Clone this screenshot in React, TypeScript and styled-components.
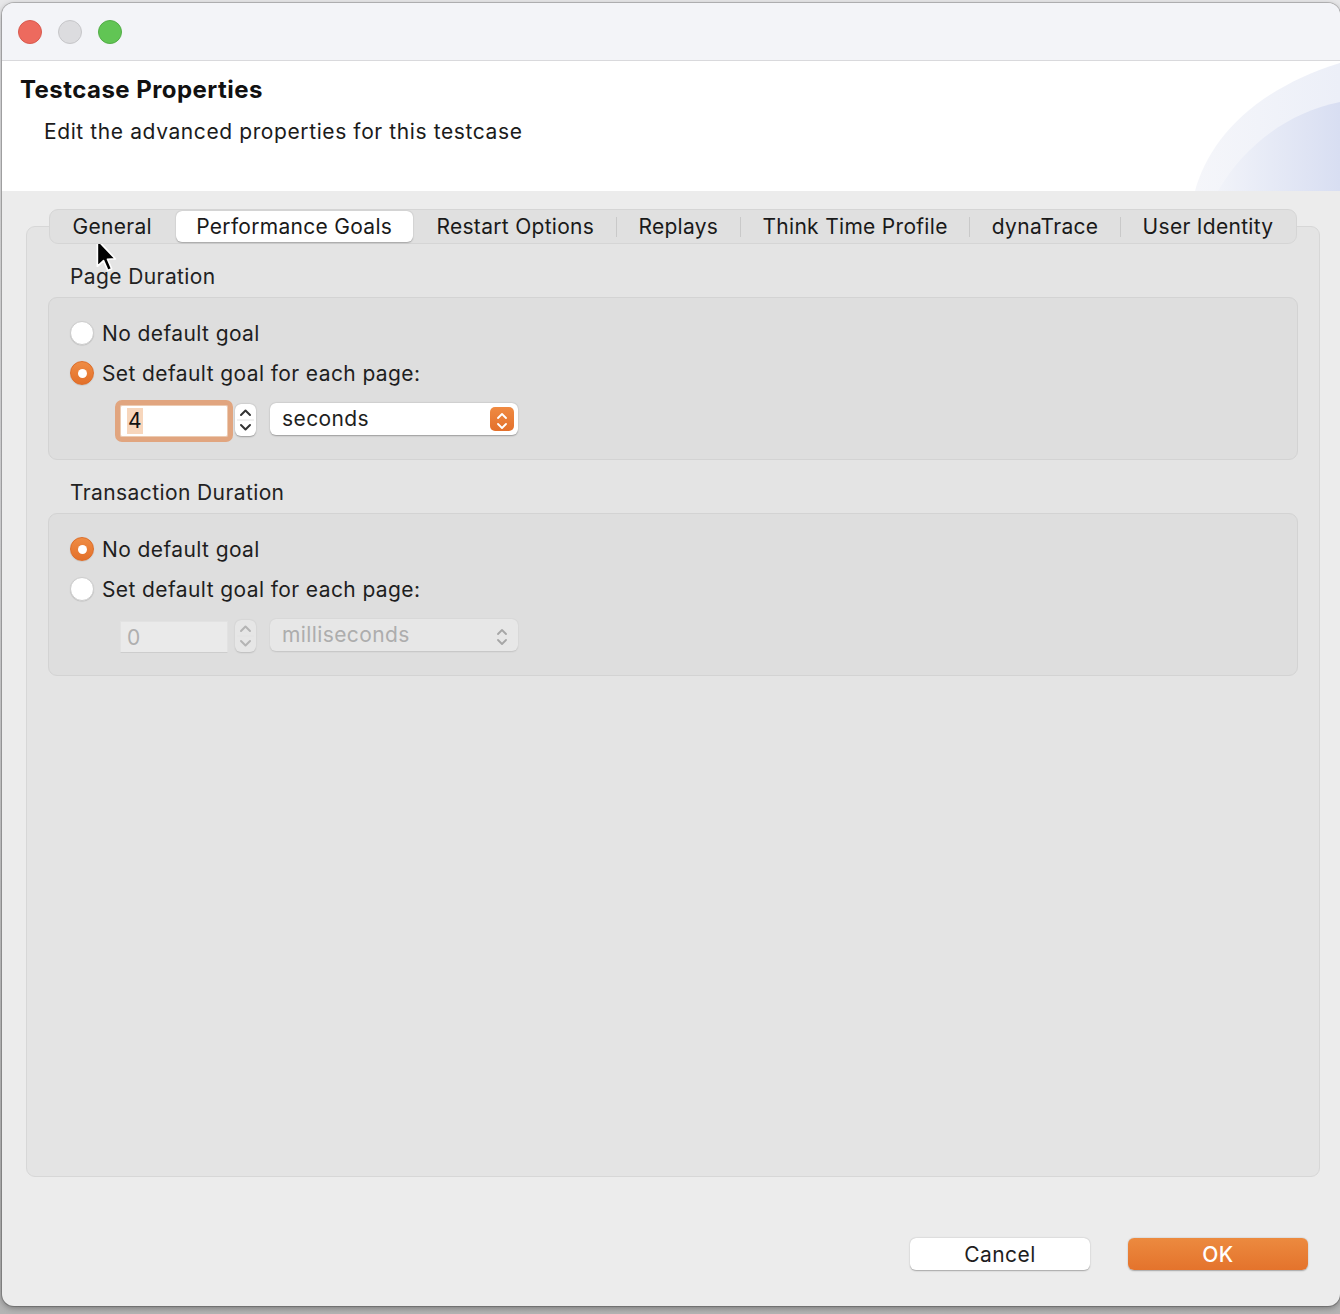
import styled, { createGlobalStyle } from "styled-components";

const GlobalStyle = createGlobalStyle`
  html, body {
    margin: 0;
    padding: 0;
  }
  body {
    font-family: Inter, "Noto Sans", "Liberation Sans", sans-serif;
    color: #1e1e1e;
    -webkit-font-smoothing: antialiased;
  }
`;

const Desktop = styled.div`
  width: 1340px;
  height: 1314px;
  box-sizing: border-box;
  padding: 3px 0 0 2px;
  background: linear-gradient(#e7e7e9 0, #e2e2e4 40%, #b4b4b4 100%);
  overflow: hidden;
`;

const Window = styled.div`
  position: relative;
  width: 1338px;
  height: 1303px;
  display: flex;
  flex-direction: column;
  border-radius: 12px;
  overflow: hidden;
  background: #ececec;
  box-shadow: 0 0 0 1px rgba(0, 0, 0, 0.18), 0 2px 6px rgba(0, 0, 0, 0.35);
`;

const TitleBar = styled.div`
  height: 57px;
  flex-shrink: 0;
  display: flex;
  align-items: center;
  gap: 16px;
  padding-left: 16px;
  background: #f3f4f8;
  border-bottom: 1px solid #d9d9dc;
`;

const Light = styled.span<{ $color: string; $edge: string }>`
  width: 24px;
  height: 24px;
  border-radius: 50%;
  box-sizing: border-box;
  background: ${(p) => p.$color};
  border: 1px solid ${(p) => p.$edge};
`;

const Header = styled.div`
  position: relative;
  height: 130px;
  flex-shrink: 0;
  background: #fff;
  padding: 14px 0 0 18px;
  box-sizing: border-box;
`;

const Title = styled.h1`
  margin: 0;
  font-size: 24px;
  line-height: 30px;
  font-weight: 700;
  letter-spacing: 0.45px;
  color: #111;
`;

const Subtitle = styled.p`
  margin: 14px 0 0 24px;
  font-size: 21px;
  line-height: 26px;
  letter-spacing: 0.6px;
  color: #1b1b1b;
`;

const Swoosh = styled.svg`
  position: absolute;
  right: 0;
  bottom: 0;
`;

const Body = styled.div`
  flex: 1;
  display: flex;
  flex-direction: column;
  padding: 18px 20px 36px 24px;
`;

const TabArea = styled.div`
  flex: 1;
  display: flex;
  flex-direction: column;
`;

const TabBar = styled.div`
  position: relative;
  z-index: 1;
  align-self: center;
  height: 35px;
  box-sizing: border-box;
  display: flex;
  align-items: center;
  padding: 0 2px;
  margin-bottom: -18px;
  background: #e0e0e0;
  border: 1px solid #d5d5d5;
  border-radius: 9px;
`;

const Tab = styled.div<{ $active?: boolean }>`
  height: 31px;
  line-height: 31px;
  padding: 0 20.6px;
  font-size: 21px;
  letter-spacing: 0.3px;
  border-radius: 6px;
  color: #1a1a1a;
  white-space: nowrap;
  background: ${(p) => (p.$active ? "#fff" : "transparent")};
  box-shadow: ${(p) =>
    p.$active ? "0 0.5px 1.5px rgba(0,0,0,0.28)" : "none"};
`;

const TabDivider = styled.span<{ $hidden?: boolean }>`
  width: 1px;
  height: 20px;
  margin: 0 1px;
  background: ${(p) => (p.$hidden ? "transparent" : "#c9c9c9")};
`;

const Panel = styled.div`
  flex: 1;
  background: #e4e4e4;
  border: 1px solid #d7d7d7;
  border-radius: 9px;
  padding: 37px 21px;
`;

const GroupLabel = styled.div`
  padding-left: 22px;
  font-size: 21px;
  line-height: 26px;
  letter-spacing: 0.4px;
  margin-bottom: 7px;
  color: #222;
`;

const Group = styled.div`
  background: #dedede;
  border: 1px solid #d3d3d3;
  border-radius: 9px;
  padding: 21px 21px 17px;
  margin-bottom: 20px;
`;

const RadioRow = styled.label`
  display: flex;
  align-items: center;
  gap: 8px;
  height: 28px;
  font-size: 21px;
  letter-spacing: 0.4px;
  color: #1e1e1e;
  & + & {
    margin-top: 12px;
  }
`;

const Radio = styled.span<{ $checked?: boolean }>`
  position: relative;
  width: 24px;
  height: 24px;
  border-radius: 50%;
  box-sizing: border-box;
  background: ${(p) =>
    p.$checked ? "linear-gradient(#ef8c44, #e3702a)" : "#fff"};
  border: 1px solid ${(p) => (p.$checked ? "#dd6e2a" : "#cdcdcd")};
  box-shadow: 0 0.5px 1px rgba(0, 0, 0, 0.15);
  &::after {
    content: "";
    display: ${(p) => (p.$checked ? "block" : "none")};
    position: absolute;
    left: 50%;
    top: 50%;
    width: 9px;
    height: 9px;
    margin: -4.5px 0 0 -4.5px;
    border-radius: 50%;
    background: #fff;
  }
`;

const FieldRow = styled.div`
  display: flex;
  align-items: center;
  height: 42px;
  margin-top: 13px;
  padding-left: 50px;
`;

const NumberField = styled.div<{ $focused?: boolean; $disabled?: boolean }>`
  width: 108px;
  height: 32px;
  box-sizing: border-box;
  display: flex;
  align-items: center;
  padding-left: 6px;
  font-size: 21px;
  border-radius: ${(p) => (p.$focused ? "2px" : "0")};
  background: ${(p) => (p.$disabled ? "#eaeaea" : "#fff")};
  color: ${(p) => (p.$disabled ? "#afafaf" : "#111")};
  border: 1px solid ${(p) => (p.$focused ? "#eccbb2" : "#e2e2e2")};
  border-bottom-color: ${(p) =>
    p.$focused ? "#eccbb2" : p.$disabled ? "#cdcdcd" : "#e2e2e2"};
  outline: ${(p) => (p.$focused ? "5px solid #e1a57f" : "none")};
  outline-offset: 0;
`;

const Selected = styled.span`
  background: #f7d6bc;
  line-height: 26px;
  padding: 0 1px;
`;

const Stepper = styled.div<{ $disabled?: boolean }>`
  width: 21px;
  height: 32px;
  margin: 0 0 3px 7px;
  border-radius: 6px;
  display: flex;
  align-items: center;
  justify-content: center;
  background: ${(p) => (p.$disabled ? "#e6e6e6" : "#fff")};
  box-shadow: 0 0.5px 1.5px rgba(0, 0, 0, ${(p) => (p.$disabled ? 0.15 : 0.3)});
  color: ${(p) => (p.$disabled ? "#b4b4b4" : "#333")};
`;

const Select = styled.div<{ $disabled?: boolean }>`
  width: 248px;
  height: 32px;
  margin: 0 0 5px 14px;
  box-sizing: border-box;
  display: flex;
  align-items: center;
  justify-content: space-between;
  padding: 0 4px 0 12px;
  border-radius: 6px;
  font-size: 21px;
  letter-spacing: 0.4px;
  background: ${(p) => (p.$disabled ? "#e7e7e7" : "#fff")};
  color: ${(p) => (p.$disabled ? "#adadad" : "#1e1e1e")};
  box-shadow: 0 0.5px 1.5px rgba(0, 0, 0, ${(p) => (p.$disabled ? 0.12 : 0.3)});
`;

const SelectArrow = styled.span<{ $disabled?: boolean }>`
  width: 24px;
  height: 24px;
  border-radius: 5px;
  display: flex;
  align-items: center;
  justify-content: center;
  background: ${(p) =>
    p.$disabled ? "transparent" : "linear-gradient(#ef8a42, #e3702b)"};
  color: ${(p) => (p.$disabled ? "#a6a6a6" : "#fff")};
`;

const ButtonBar = styled.div`
  display: flex;
  justify-content: flex-end;
  gap: 38px;
  margin-top: 61px;
  padding-right: 12px;
`;

const Button = styled.button<{ $primary?: boolean }>`
  width: 180px;
  height: 32px;
  border: none;
  border-radius: 6px;
  font-family: inherit;
  font-size: 21px;
  font-weight: ${(p) => (p.$primary ? 500 : 400)};
  letter-spacing: 0.4px;
  color: ${(p) => (p.$primary ? "#fff" : "#1e1e1e")};
  background: ${(p) =>
    p.$primary ? "linear-gradient(#ec8a3f, #e4732c)" : "#fff"};
  box-shadow: 0 0.5px 1.5px rgba(0, 0, 0, 0.3);
`;

const Cursor = styled.svg`
  position: absolute;
  left: 93px;
  top: 235px;
`;

const Chevrons = ({ gap = 3 }: { gap?: number }) => (
  <svg width="12" height="20" viewBox="0 0 12 20">
    <path
      d={`M2 ${8 - gap} L6 ${4 - gap} L10 ${8 - gap} M2 ${12 + gap} L6 ${
        16 + gap
      } L10 ${12 + gap}`}
      fill="none"
      stroke="currentColor"
      strokeWidth="1.8"
      strokeLinecap="round"
      strokeLinejoin="round"
      transform="translate(0 2)"
    />
  </svg>
);

const StepperIcon = () => (
  <svg width="21" height="32" viewBox="0 0 21 32">
    <path
      d="M6 11 L10.5 6.5 L15 11 M6 21 L10.5 25.5 L15 21"
      fill="none"
      stroke="currentColor"
      strokeWidth="2"
      strokeLinecap="round"
      strokeLinejoin="round"
    />
    <line x1="2" y1="16" x2="19" y2="16" stroke="#e2e2e2" strokeWidth="1" />
  </svg>
);

const tabs = [
  "General",
  "Performance Goals",
  "Restart Options",
  "Replays",
  "Think Time Profile",
  "dynaTrace",
  "User Identity",
];
const activeTab = 1;

type GoalGroupProps = {
  label: string;
  setGoal: boolean;
  value: string;
  unit: string;
};

const GoalGroup = ({ label, setGoal, value, unit }: GoalGroupProps) => (
  <>
    <GroupLabel>{label}</GroupLabel>
    <Group>
      <RadioRow>
        <Radio $checked={!setGoal} />
        No default goal
      </RadioRow>
      <RadioRow>
        <Radio $checked={setGoal} />
        Set default goal for each page:
      </RadioRow>
      <FieldRow>
        <NumberField $focused={setGoal} $disabled={!setGoal}>
          {setGoal ? <Selected>{value}</Selected> : value}
        </NumberField>
        <Stepper $disabled={!setGoal}>
          <StepperIcon />
        </Stepper>
        <Select $disabled={!setGoal}>
          {unit}
          <SelectArrow $disabled={!setGoal}>
            <Chevrons gap={1} />
          </SelectArrow>
        </Select>
      </FieldRow>
    </Group>
  </>
);

export default function App() {
  return (
    <Desktop>
      <GlobalStyle />
      <Window>
        <TitleBar>
          <Light $color="#ed6a5e" $edge="#d85a4f" />
          <Light $color="#dcdcdf" $edge="#c6c6c9" />
          <Light $color="#61c554" $edge="#52ad47" />
        </TitleBar>
        <Header>
          <Title>Testcase Properties</Title>
          <Subtitle>Edit the advanced properties for this testcase</Subtitle>
          <Swoosh width="150" height="130" viewBox="0 0 150 130">
            <defs>
              <linearGradient id="sw1" x1="0" x2="1" y1="0" y2="0">
                <stop offset="0" stopColor="#f5f6fa" />
                <stop offset="1" stopColor="#eceff8" />
              </linearGradient>
              <linearGradient id="sw2" x1="0" x2="1" y1="0" y2="0">
                <stop offset="0" stopColor="#f1f3f9" />
                <stop offset="1" stopColor="#d8def2" />
              </linearGradient>
            </defs>
            <path d="M5 130 C18 82 60 30 150 2 L150 130 Z" fill="url(#sw1)" />
            <path d="M28 130 C52 88 95 52 150 41 L150 130 Z" fill="url(#sw2)" />
          </Swoosh>
        </Header>
        <Body>
          <TabArea>
            <TabBar>
              {tabs.map((t, i) => (
                <>
                  {i > 0 && (
                    <TabDivider
                      key={`d${i}`}
                      $hidden={i === activeTab || i === activeTab + 1}
                    />
                  )}
                  <Tab key={t} $active={i === activeTab}>
                    {t}
                  </Tab>
                </>
              ))}
            </TabBar>
            <Panel>
              <GoalGroup
                label="Page Duration"
                setGoal
                value="4"
                unit="seconds"
              />
              <GoalGroup
                label="Transaction Duration"
                setGoal={false}
                value="0"
                unit="milliseconds"
              />
            </Panel>
          </TabArea>
          <ButtonBar>
            <Button>Cancel</Button>
            <Button $primary>OK</Button>
          </ButtonBar>
        </Body>
        <Cursor width="24" height="36" viewBox="0 0 18 28">
          <path
            d="M1.5 1.5 L1.5 22 L6.3 17.6 L9.6 25.2 L12.6 23.9 L9.4 16.5 L15.6 16.3 Z"
            fill="#000"
            stroke="#fff"
            strokeWidth="1.3"
            strokeLinejoin="round"
          />
        </Cursor>
      </Window>
    </Desktop>
  );
}
